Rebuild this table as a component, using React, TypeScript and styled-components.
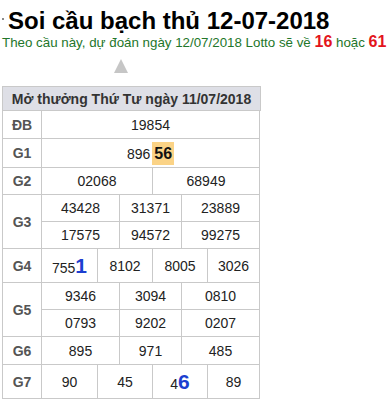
import React from "react";
import styled, { createGlobalStyle } from "styled-components";

const GlobalStyle = createGlobalStyle`
  body {
    margin: 0;
    background: #ffffff;
    font-family: "Liberation Sans", Arial, sans-serif;
  }
`;

type Cell = { text: string; mark?: "hot" | "blue" };
type Group = { label: string; widths: number[]; heights: number[]; rows: Cell[][] };

const groups: Group[] = [
  { label: "ĐB", widths: [218], heights: [28], rows: [[{ text: "19854" }]] },
  { label: "G1", widths: [218], heights: [29], rows: [[{ text: "896", mark: "hot" }]] },
  { label: "G2", widths: [111, 107], heights: [27], rows: [[{ text: "02068" }, { text: "68949" }]] },
  {
    label: "G3",
    widths: [78, 62, 78],
    heights: [27, 27],
    rows: [
      [{ text: "43428" }, { text: "31371" }, { text: "23889" }],
      [{ text: "17575" }, { text: "94572" }, { text: "99275" }],
    ],
  },
  {
    label: "G4",
    widths: [56, 55, 55, 52],
    heights: [34],
    rows: [[{ text: "755", mark: "blue" }, { text: "8102" }, { text: "8005" }, { text: "3026" }]],
  },
  {
    label: "G5",
    widths: [78, 62, 78],
    heights: [27, 27],
    rows: [
      [{ text: "9346" }, { text: "3094" }, { text: "0810" }],
      [{ text: "0793" }, { text: "9202" }, { text: "0207" }],
    ],
  },
  { label: "G6", widths: [78, 62, 78], heights: [28], rows: [[{ text: "895" }, { text: "971" }, { text: "485" }]] },
  {
    label: "G7",
    widths: [56, 55, 55, 52],
    heights: [34],
    rows: [[{ text: "90" }, { text: "45" }, { text: "4", mark: "blue" }, { text: "89" }]],
  },
];

// the last two digits that make up the predicted lotto
const tail: Record<string, string> = { G1: "56", G4: "1", G7: "6" };

const Page = styled.div`
  padding: 9px 0 0 2px;
`;

const Title = styled.h1`
  margin: 0;
  font-size: 24px;
  line-height: 24px;
  font-weight: 700;
  color: #000000;
  display: flex;
  align-items: center;
`;

const Tick = styled.span`
  display: inline-block;
  width: 2px;
  height: 2px;
  background: #8a8a8a;
  margin: 0 4px 5px 0;
`;

const Subtitle = styled.p`
  margin: 0;
  font-size: 13.33px;
  line-height: 18px;
  color: #23762a;
  white-space: nowrap;
`;

const Lotto = styled.b`
  color: #e3141c;
  font-size: 16px;
`;

const Pointer = styled.div`
  width: 0;
  height: 0;
  margin: 7px 0 0 112px;
  border-left: 7.5px solid transparent;
  border-right: 7.5px solid transparent;
  border-bottom: 14px solid #c6c6c6;
`;

const Table = styled.div`
  margin-top: 13px;
  width: 258px;
  border-left: 1px solid #c9c9c9;
  border-top: 1px solid #c9c9c9;
  box-shadow: 0 1px 0 #c9c9c9;
  color: #222222;
  font-size: 14px;
`;

const Header = styled.div`
  height: 24px;
  box-sizing: border-box;
  border-right: 1px solid #c9c9c9;
  border-bottom: 1px solid #c9c9c9;
  background: #dedfe6;
  color: #333333;
  font-weight: 700;
  display: flex;
  align-items: center;
  justify-content: center;
  padding-top: 1px;
`;

const GroupBox = styled.div`
  display: grid;
  grid-template-columns: 39px 218px;
`;

const Label = styled.div`
  box-sizing: border-box;
  border-right: 1px solid #c9c9c9;
  border-bottom: 1px solid #c9c9c9;
  display: flex;
  align-items: center;
  justify-content: center;
  font-weight: 700;
  color: #555555;
`;

const Row = styled.div<{ $h: number; $cols: string }>`
  display: grid;
  grid-template-columns: ${(p) => p.$cols};
  height: ${(p) => p.$h}px;
`;

const Num = styled.div`
  box-sizing: border-box;
  border-right: 1px solid #c9c9c9;
  border-bottom: 1px solid #c9c9c9;
  display: flex;
  align-items: center;
  justify-content: center;
  white-space: nowrap;
`;

const Hot = styled.b`
  display: inline-block;
  margin-left: 2px;
  padding: 3px 2px 2px;
  background: #fbd386;
  color: #111111;
  font-size: 16px;
  line-height: 18px;
`;

const Blue = styled.b`
  color: #1c3fd0;
  font-size: 21px;
  line-height: 20px;
`;

const Digits = styled.span`
  display: inline-flex;
  align-items: baseline;
`;

function NumberCell({ cell, label }: { cell: Cell; label: string }) {
  if (cell.mark === "hot") {
    return (
      <Digits>
        {cell.text}
        <Hot>{tail[label]}</Hot>
      </Digits>
    );
  }
  if (cell.mark === "blue") {
    return (
      <Digits>
        {cell.text}
        <Blue>{tail[label]}</Blue>
      </Digits>
    );
  }
  return <>{cell.text}</>;
}

export default function App() {
  return (
    <Page>
      <GlobalStyle />
      <Title>
        <Tick />
        Soi cầu bạch thủ 12-07-2018
      </Title>
      <Subtitle>
        Theo cầu này, dự đoán ngày 12/07/2018 Lotto sẽ về <Lotto>16</Lotto> hoặc <Lotto>61</Lotto>
      </Subtitle>
      <Pointer />
      <Table>
        <Header>Mở thưởng Thứ Tư ngày 11/07/2018</Header>
        {groups.map((g) => (
          <GroupBox key={g.label}>
            <Label>{g.label}</Label>
            <div>
              {g.rows.map((row, ri) => (
                <Row key={ri} $h={g.heights[ri]} $cols={g.widths.map((w) => `${w}px`).join(" ")}>
                  {row.map((c, ci) => (
                    <Num key={ci}>
                      <NumberCell cell={c} label={g.label} />
                    </Num>
                  ))}
                </Row>
              ))}
            </div>
          </GroupBox>
        ))}
      </Table>
    </Page>
  );
}
